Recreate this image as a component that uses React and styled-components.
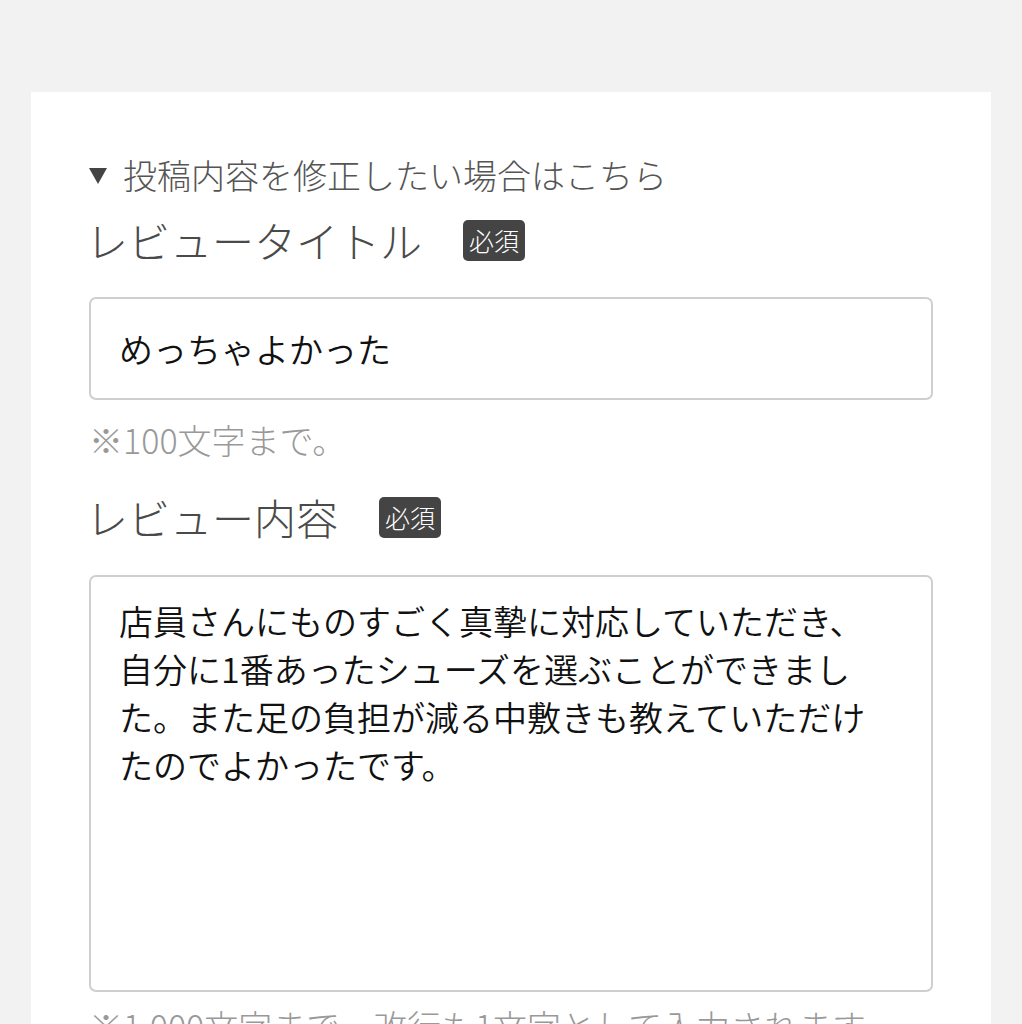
import React from 'react';
import styled, { createGlobalStyle } from 'styled-components';

const GlobalStyle = createGlobalStyle`
  html, body {
    margin: 0;
    padding: 0;
    background: #f2f2f2;
  }
  body {
    font-family: "Noto Sans CJK JP", "Noto Sans", sans-serif;
  }
`;

const Page = styled.div`
  padding: 92px 31px 0 31px;
  height: 932px;
  overflow: hidden;
`;

const Card = styled.div`
  background: #fff;
  width: 960px;
  min-height: 1000px;
  box-sizing: border-box;
  padding: 58px 58px 40px 58px;
`;

const Toggle = styled.div`
  display: flex;
  align-items: center;
  font-size: 34px;
  font-weight: 300;
  line-height: 50px;
  color: #555;
`;

const Arrow = styled.span`
  width: 0;
  height: 0;
  border-left: 9px solid transparent;
  border-right: 9px solid transparent;
  border-top: 16px solid #444;
  margin: 2px 16px 0 0;
`;

const LabelRow = styled.div`
  display: flex;
  align-items: center;
  height: 60px;
  margin-top: ${({ top }) => top}px;
`;

const Label = styled.span`
  font-size: 42px;
  font-weight: 300;
  line-height: 60px;
  color: #4a4a4a;
  margin-left: -3px;
`;

const Required = styled.span`
  margin-left: 41px;
  width: 62px;
  height: 41px;
  border-radius: 5px;
  background: #444;
  color: #fff;
  font-size: 25px;
  font-weight: 300;
  line-height: 41px;
  text-align: center;
`;

const TextInput = styled.input`
  display: block;
  box-sizing: border-box;
  width: 100%;
  height: 103px;
  margin-top: 27px;
  padding: 0 28px;
  border: 2px solid #cfcfcf;
  border-radius: 7px;
  font-family: inherit;
  font-size: 34px;
  font-weight: 350;
  color: #111;
  background: #fff;
  outline: none;
`;

const TextArea = styled.textarea`
  display: block;
  box-sizing: border-box;
  width: 100%;
  height: 417px;
  margin-top: 28px;
  padding: 20px 28px;
  border: 2px solid #cfcfcf;
  border-radius: 7px;
  font-family: inherit;
  font-size: 34px;
  font-weight: 350;
  line-height: 48px;
  color: #111;
  background: #fff;
  resize: none;
  outline: none;
`;

const Note = styled.p`
  margin: ${({ top }) => top}px 0 0 0;
  font-size: 34px;
  font-weight: 300;
  line-height: 50px;
  color: #999;
  white-space: nowrap;
`;

const reviewBody =
  '店員さんにものすごく真摯に対応していただき、\n自分に1番あったシューズを選ぶことができまし\nた。また足の負担が減る中敷きも教えていただけ\nたのでよかったです。';

const App = () => (
  <>
    <GlobalStyle />
    <Page>
      <Card>
        <Toggle>
          <Arrow />
          投稿内容を修正したい場合はこちら
        </Toggle>
        <LabelRow top={10}>
          <Label>レビュータイトル</Label>
          <Required>必須</Required>
        </LabelRow>
        <TextInput type="text" defaultValue="めっちゃよかった" readOnly />
        <Note top={15}>※100文字まで。</Note>
        <LabelRow top={22}>
          <Label>レビュー内容</Label>
          <Required>必須</Required>
        </LabelRow>
        <TextArea defaultValue={reviewBody} readOnly />
        <Note top={9}>※1,000文字まで。改行も1文字として入力されます。</Note>
      </Card>
    </Page>
  </>
);

export default App;
